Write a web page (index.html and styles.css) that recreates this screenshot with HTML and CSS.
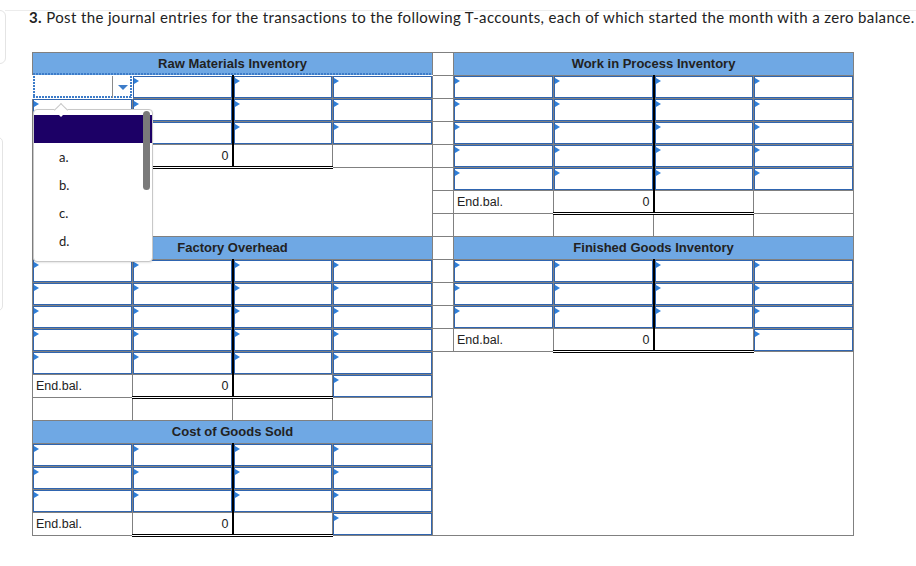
FILE: index.html
```html
<!DOCTYPE html>
<html>
<head>
<meta charset="utf-8">
<link rel="stylesheet" href="styles.css">
</head>
<body>
<div class="page">
  <div class="side side-a"></div>
  <div class="side side-b"></div>
  <div class="rule"></div>
  <p class="q"><b>3.</b> Post the journal entries for the transactions to the following T-accounts, each of which started the month with a zero balance.</p>
  <div class="wrap">
    <table class="t">
      <colgroup>
        <col class="cw"><col class="cw"><col class="cw"><col class="cw"><col class="sw"><col class="cw"><col class="cw"><col class="cw"><col class="cw">
      </colgroup>
      <tr>
        <td class="hd dot" colspan="4">Raw Materials Inventory</td>
        <td class="sp"></td>
        <td class="hd" colspan="4">Work in Process Inventory</td>
      </tr>
      <tr>
        <td class="dd"></td>
        <td class="i c"></td><td class="i"></td><td class="i"></td>
        <td class="sp"></td>
        <td class="i"></td><td class="i c"></td><td class="i"></td><td class="i"></td>
      </tr>
      <tr>
        <td class="i"></td><td class="i c"></td><td class="i"></td><td class="i"></td>
        <td class="sp"></td>
        <td class="i"></td><td class="i c"></td><td class="i"></td><td class="i"></td>
      </tr>
      <tr>
        <td class="i"></td><td class="i c"></td><td class="i"></td><td class="i"></td>
        <td class="sp"></td>
        <td class="i"></td><td class="i c"></td><td class="i"></td><td class="i"></td>
      </tr>
      <tr>
        <td class="lbl"></td><td class="val c">0</td><td class="eb"></td><td class="pl"></td>
        <td class="sp"></td>
        <td class="i"></td><td class="i c"></td><td class="i"></td><td class="i"></td>
      </tr>
      <tr>
        <td class="blank" colspan="4" rowspan="3"></td>
        <td class="sp"></td>
        <td class="i"></td><td class="i c"></td><td class="i"></td><td class="i"></td>
      </tr>
      <tr>
        <td class="sp"></td>
        <td class="lbl">End.bal.</td><td class="val c">0</td><td class="eb"></td><td class="pl"></td>
      </tr>
      <tr>
        <td class="sp"></td>
        <td class="pl"></td><td class="pl"></td><td class="pl"></td><td class="pl"></td>
      </tr>
      <tr>
        <td class="hd" colspan="4">Factory Overhead</td>
        <td class="sp"></td>
        <td class="hd" colspan="4">Finished Goods Inventory</td>
      </tr>
      <tr>
        <td class="i"></td><td class="i c"></td><td class="i"></td><td class="i"></td>
        <td class="sp"></td>
        <td class="i"></td><td class="i c"></td><td class="i"></td><td class="i"></td>
      </tr>
      <tr>
        <td class="i"></td><td class="i c"></td><td class="i"></td><td class="i"></td>
        <td class="sp"></td>
        <td class="i"></td><td class="i c"></td><td class="i"></td><td class="i"></td>
      </tr>
      <tr>
        <td class="i"></td><td class="i c"></td><td class="i"></td><td class="i"></td>
        <td class="sp"></td>
        <td class="i"></td><td class="i c"></td><td class="i"></td><td class="i"></td>
      </tr>
      <tr>
        <td class="i"></td><td class="i c"></td><td class="i"></td><td class="i"></td>
        <td class="sp"></td>
        <td class="lbl">End.bal.</td><td class="val c">0</td><td class="eb"></td><td class="i"></td>
      </tr>
      <tr>
        <td class="i"></td><td class="i c"></td><td class="i"></td><td class="i"></td>
        <td class="blank" colspan="5" rowspan="8"></td>
      </tr>
      <tr>
        <td class="lbl">End.bal.</td><td class="val c">0</td><td class="eb"></td><td class="i"></td>
      </tr>
      <tr>
        <td class="pl"></td><td class="pl"></td><td class="pl"></td><td class="pl"></td>
      </tr>
      <tr>
        <td class="hd" colspan="4">Cost of Goods Sold</td>
      </tr>
      <tr>
        <td class="i"></td><td class="i c"></td><td class="i"></td><td class="i"></td>
      </tr>
      <tr>
        <td class="i"></td><td class="i c"></td><td class="i"></td><td class="i"></td>
      </tr>
      <tr>
        <td class="i"></td><td class="i c"></td><td class="i"></td><td class="i"></td>
      </tr>
      <tr>
        <td class="lbl">End.bal.</td><td class="val c">0</td><td class="eb"></td><td class="i"></td>
      </tr>
    </table>
    <div class="pop">
      <div class="sel"></div>
      <div class="opt">a.</div>
      <div class="opt">b.</div>
      <div class="opt">c.</div>
      <div class="opt">d.</div>
      <div class="thumb"></div>
    </div>
  </div>
</div>
</body>
</html>
```

FILE: styles.css
```css
* { box-sizing: border-box; }
html, body { margin: 0; padding: 0; background: #fff; }
body { font-family: "Liberation Sans", Arial, sans-serif; color: #222; }

.page { position: relative; width: 916px; height: 566px; overflow: hidden; }

.side { position: absolute; border: 1px solid #e4e4e4; border-radius: 6px; }
.side-a { left: -7px; top: 10px; width: 13px; height: 54px; }
.side-b { left: -7px; top: 137px; width: 10px; height: 174px; }

.rule { margin: 10px 0 0 5px; border-top: 1px solid #ececec; }

.q {
  margin: -1px 0 0 29px;
  font-family: Lato, "Open Sans", sans-serif;
  font-size: 15px;
  line-height: 15px;
  letter-spacing: 0.37px;
  color: #222;
  white-space: nowrap;
}
.q b { font-weight: 700; }

.wrap { position: relative; margin: 27px 0 0 32px; width: 821px; }

.t { border-collapse: collapse; table-layout: fixed; width: 821px; }
.cw { width: 100px; }
.sw { width: 21px; }

.t td {
  border: 1px solid #808080;
  padding: 0;
  height: 23px;
  font-size: 12.5px;
  line-height: 14px;
  vertical-align: middle;
}

.t td.hd {
  background-color: #6fa8e4;
  text-align: center;
  font-weight: bold;
  font-size: 13px;
  color: #222;
}
.t td.dot {
  border-bottom-color: #fff;
  background-image: repeating-linear-gradient(90deg, #3d7cc9 0 2px, transparent 2px 3px);
  background-size: 100% 2px;
  background-position: left bottom;
  background-repeat: no-repeat;
}

.t td.c { border-right: 2px solid #000; }

.t td.i {
  position: relative;
  box-shadow: inset 0 0 0 1px #2f65b0;
}
.t td.i::before {
  content: "";
  position: absolute;
  left: 1px;
  top: 2px;
  border-left: 5px solid #2f7fd8;
  border-top: 3.5px solid transparent;
  border-bottom: 3.5px solid transparent;
}

.t td.dd {
  position: relative;
  border-color: #fff;
  background:
    linear-gradient(#8a8a8a, #8a8a8a) right 19px top / 1px 100% no-repeat,
    repeating-linear-gradient(90deg, #3d7cc9 0 2px, transparent 2px 3px) left bottom / 100% 2px no-repeat,
    repeating-linear-gradient(180deg, #3d7cc9 0 2px, transparent 2px 3px) left top / 2px 100% no-repeat,
    repeating-linear-gradient(180deg, #3d7cc9 0 2px, transparent 2px 3px) right top / 2px 100% no-repeat;
}
.t td.dd::after {
  content: "";
  position: absolute;
  right: 4px;
  top: 9px;
  border-top: 5px solid #3d7cc9;
  border-left: 5px solid transparent;
  border-right: 5px solid transparent;
}

.t td.lbl { padding-left: 3px; color: #222; }
.t td.val {
  text-align: right;
  padding-right: 3px;
  border-top: 1px solid #000;
  border-bottom: 3px double #000;
}
.t td.eb {
  border-top: 1px solid #000;
  border-bottom: 3px double #000;
}

.pop {
  position: absolute;
  left: 1px;
  top: 57px;
  width: 120px;
  height: 153px;
  background: #fff;
  border: 1px solid #c8c8c8;
  border-radius: 4px;
  box-shadow: 0 1px 2px rgba(0, 0, 0, 0.10);
  padding-top: 5px;
}
.pop::before {
  content: "";
  position: absolute;
  left: 22px;
  top: -5px;
  width: 9px;
  height: 9px;
  background: #fff;
  border-left: 1px solid #c8c8c8;
  border-top: 1px solid #c8c8c8;
  transform: rotate(45deg);
}
.sel { height: 28px; background: #1c0066; }
.opt {
  height: 28px;
  line-height: 28px;
  padding-left: 25px;
  font-family: Lato, "Open Sans", sans-serif;
  font-size: 13px;
  color: #222;
}
.thumb {
  position: absolute;
  right: 2px;
  top: 1px;
  width: 7px;
  height: 79px;
  background: #7a7a7a;
  border-radius: 4px;
}
```
